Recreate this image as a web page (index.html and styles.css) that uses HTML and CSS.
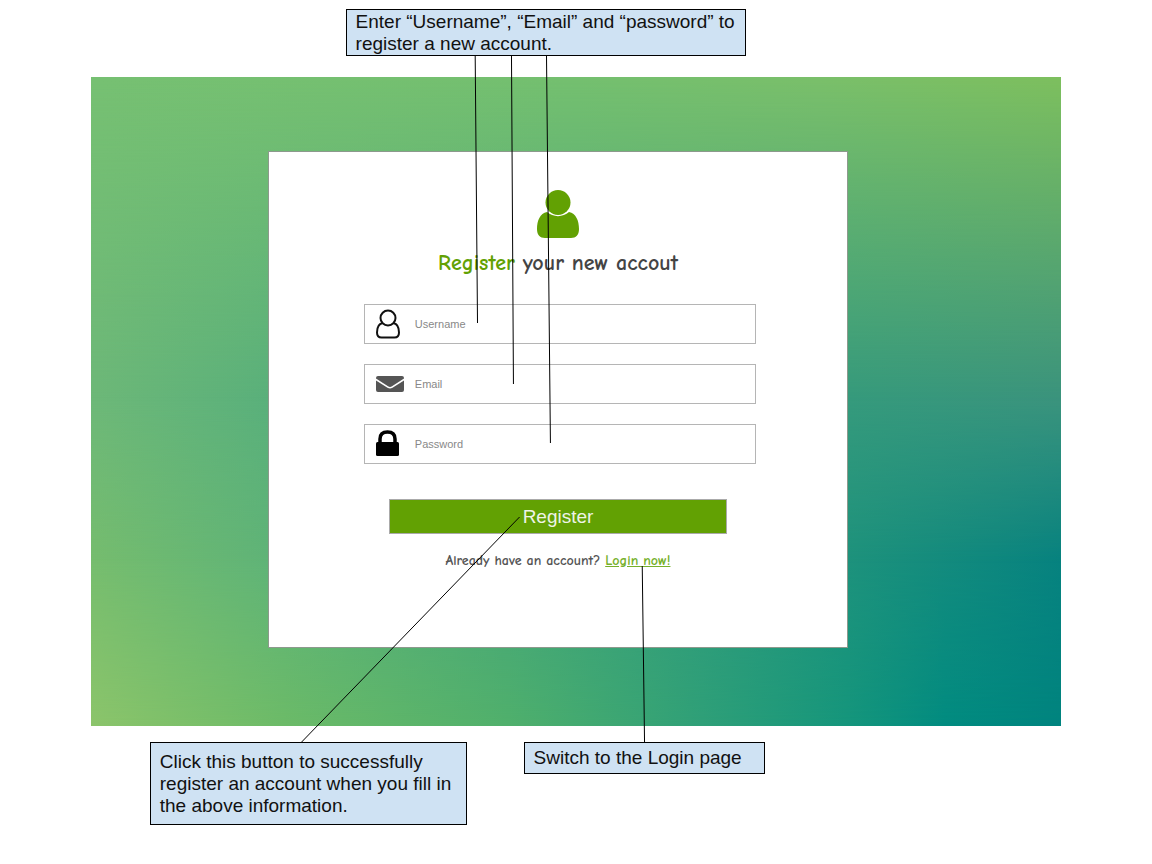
FILE: index.html
```html
<!DOCTYPE html>
<html lang="en">
<head>
<meta charset="utf-8">
<meta name="viewport" content="width=device-width, initial-scale=1">
<title>Register</title>
<link rel="stylesheet" href="styles.css">
</head>
<body>
<main class="guide">
  <p class="note note-fields">Enter “Username”, “Email” and “password” to register a new account.</p>

  <section class="stage">
    <div class="backdrop" aria-hidden="true">
      <div class="band band-bottom"></div>
      <div class="band band-lower"></div>
      <div class="band band-middle"></div>
      <div class="band band-top"></div>
    </div>
    <form class="card">
      <svg class="avatar" viewBox="0 0 42 48" aria-hidden="true">
        <path d="M10 22C3 23 0 31 0 39c0 6 3 9 8 9h26c5 0 8-3 8-9 0-8-3-16-10-17-6 5.500-16 5.500-22 0z"/>
        <circle cx="21" cy="12.500" r="12.500"/>
      </svg>
      <h1 class="title"><span class="accent">Register</span> your new accout</h1>
      <div class="fields">
        <label class="field">
          <svg class="icon" viewBox="0 0 30 30" aria-hidden="true">
            <g fill="none" stroke="#111" stroke-width="2">
              <circle cx="13" cy="9" r="7.500"/>
              <path d="M7.500 14C3.500 15 2 19 2 23.500 2 27 3.500 28.500 6.500 28.500h13c3 0 4.500-1.500 4.500-5 0-4.500-1.500-8.500-5.500-9.500"/>
            </g>
          </svg>
          <input class="entry" type="text" placeholder="Username" aria-label="Username">
        </label>
        <label class="field">
          <svg class="icon" viewBox="0 0 30 30" aria-hidden="true">
            <path fill="#555" d="M1 9q0-2 2-2h24q2 0 2 2v.500l-12 7.800q-2 1.200-4 0L1 9.500zM1 11.500l11.500 7.200q2.500 1.500 5 0L29 11.500V21q0 2-2 2H3q-2 0-2-2z"/>
          </svg>
          <input class="entry" type="email" placeholder="Email" aria-label="Email">
        </label>
        <label class="field">
          <svg class="icon" viewBox="0 0 30 30" aria-hidden="true">
            <path d="M5 14V10C5 5 8 3 12.500 3S20 5 20 10v4" fill="none" stroke="#000" stroke-width="3.500"/>
            <rect x="1" y="13" width="23" height="14" rx="1.500"/>
          </svg>
          <input class="entry" type="password" placeholder="Password" aria-label="Password">
        </label>
      </div>
      <button class="submit" type="button">Register</button>
      <p class="switch">Already have an account? <a class="login" href="#login">Login now!</a></p>
    </form>
  </section>

  <div class="notes">
    <p class="note note-button">Click this button to successfully register an account when you fill in the above information.</p>
    <p class="note note-login">Switch to the Login page</p>
  </div>

  <svg class="leaders" aria-hidden="true">
    <line x1="41.250%" y1="56" x2="41.450%" y2="323"/>
    <line x1="44.400%" y1="56" x2="44.570%" y2="384"/>
    <line x1="47.440%" y1="56" x2="47.780%" y2="443"/>
    <line x1="45.100%" y1="517" x2="26.100%" y2="743"/>
    <line x1="55.750%" y1="566" x2="55.950%" y2="742"/>
  </svg>
</main>
</body>
</html>
```
FILE: styles.css
```css
* { box-sizing: border-box; }

body {
  margin: 0;
  background: #fff;
  color: #111;
  font-family: "Liberation Sans", Arial, sans-serif;
}

.guide {
  position: relative;
  padding: 9px 0 39px;
}

.note {
  margin: 0;
  padding: 1px 9px 0;
  border: 1px solid #000;
  background: #cfe2f3;
  font-size: 19px;
  line-height: 22px;
}

.note-fields {
  width: 34.8%;
  margin-left: 30%;
}

.stage {
  display: grid;
  grid-template-columns: 177fr 580fr 213fr;
  position: relative;
  margin: 21px 7.9% 16px;
  padding: 74px 0 78px;
}

.backdrop, .band {
  position: absolute;
  inset: 0;
}

.band-bottom {
  background: linear-gradient(to right, #8cc56b, #6cbb68 20%, #50b06c 43%, #2fa078 63%, #15967c 78%, #028c80 88%, #00847f);
}

.band-lower {
  background: linear-gradient(to right, #76bd6e, #60b477 18%, #1d927c 78%, #06827f);
  mask-image: linear-gradient(#000 75%, transparent);
}

.band-middle {
  background: linear-gradient(to right, #6db878, #5ab07b 18%, #359a7c 78%, #3a937d);
  mask-image: linear-gradient(#000 50%, transparent 75%);
}

.band-top {
  background: linear-gradient(to right, #76c072, #74bf6f 50%, #7abf6a 75%, #7dbf5e);
  mask-image: linear-gradient(#000, transparent 50%);
}

.card {
  grid-column: 2;
  position: relative;
  display: flex;
  flex-direction: column;
  align-items: center;
  padding: 38px 16% 76px;
  border: 1px solid #8d998d;
  background: #fff;
}

.avatar {
  width: 42px;
  height: 48px;
  fill: #62a103;
}

.title {
  margin: 10px 0 26px;
  color: #444;
  font-family: "Comic Sans MS", "Comic Neue", Lato, sans-serif;
  font-size: 22px;
  font-weight: 700;
  line-height: 30px;
  white-space: nowrap;
}

.accent { color: #62a103; }

.fields {
  display: grid;
  gap: 20px;
  width: 100%;
  margin-left: 4px;
}

.field {
  display: flex;
  align-items: center;
  gap: 10px;
  height: 40px;
  padding: 0 10px;
  border: 1px solid #b5b5b5;
}

.icon {
  flex: none;
  width: 30px;
  height: 30px;
}

.entry {
  flex: 1;
  min-width: 0;
  padding: 0;
  border: 0;
  outline: 0;
  background: none;
  font: 11px "Liberation Sans", Arial, sans-serif;
}

.entry::placeholder { color: #888; }

.submit {
  width: 86%;
  height: 35px;
  margin: 35px 0 17px;
  padding: 0;
  border: 1px solid #aaa;
  background: #62a103;
  color: #eef3e6;
  font: 19px "Liberation Sans", Arial, sans-serif;
}

.switch {
  margin: 0;
  color: #555;
  font-family: "Comic Sans MS", "Comic Neue", Lato, sans-serif;
  font-size: 14px;
  font-weight: 700;
  line-height: 20px;
  white-space: nowrap;
}

.login { color: #76b02a; }

.notes {
  display: flex;
  align-items: flex-start;
  gap: 5.6%;
  padding-left: 13%;
}

.note-button {
  width: 31.7%;
  padding: 8px 9px 7px;
}

.note-login {
  width: 24.1%;
  padding: 4px 9px;
}

.leaders {
  position: absolute;
  inset: 0;
  width: 100%;
  height: 100%;
  stroke: #000;
  stroke-width: 1;
  pointer-events: none;
}
```
